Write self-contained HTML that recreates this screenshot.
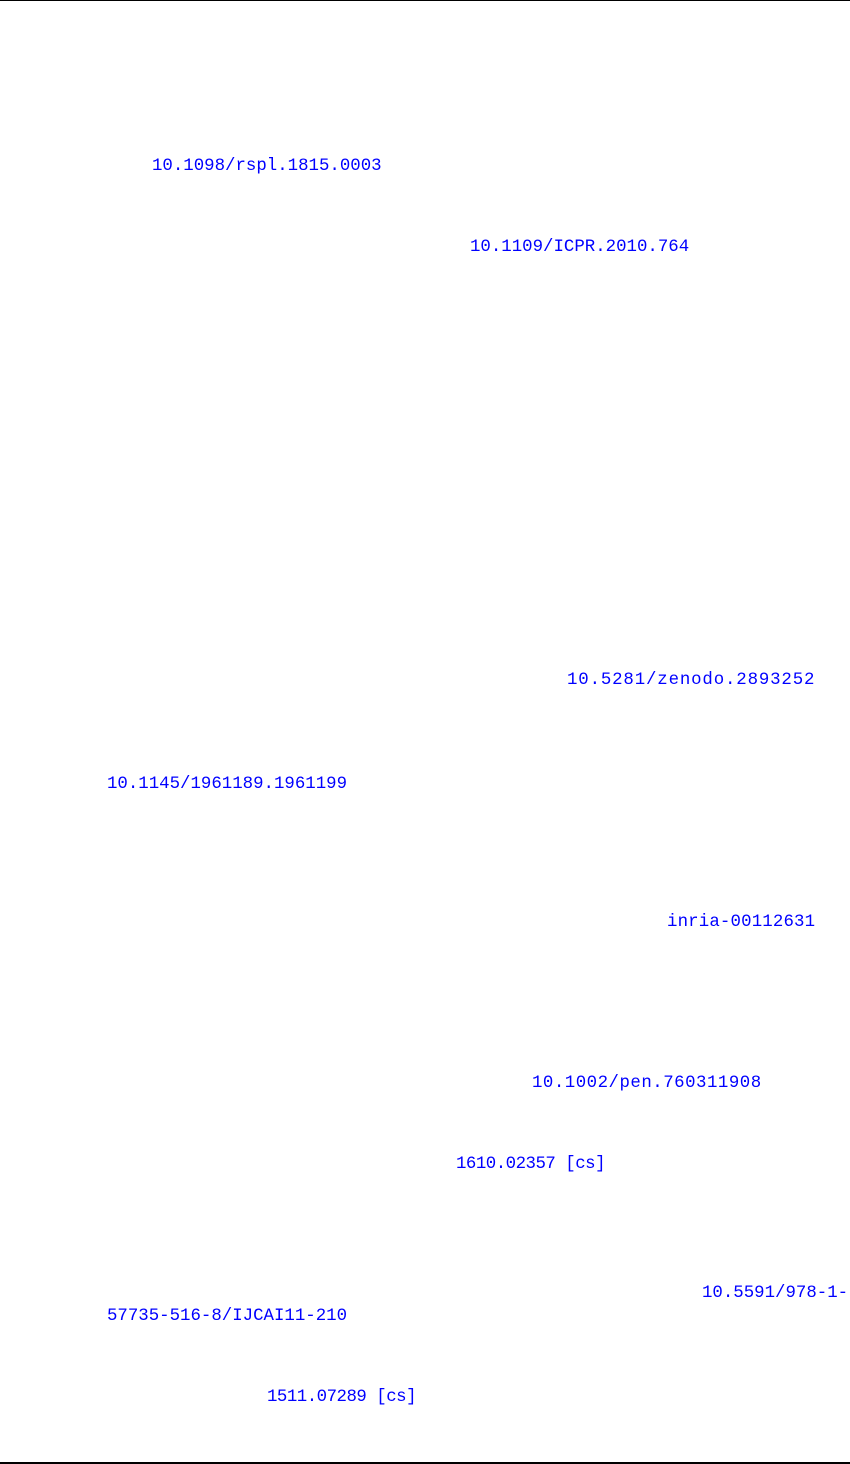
<!DOCTYPE html>
<html><head><meta charset="utf-8"><style>
html,body{margin:0;padding:0;background:#fff;}
body{width:850px;height:1464px;position:relative;overflow:hidden;}
.l{position:absolute;left:0;width:850px;height:1px;background:#000;}
.t{position:absolute;font-family:"Liberation Mono",monospace;font-size:17.4px;line-height:20px;color:#0000ff;white-space:nowrap;}
</style></head><body>
<div class="l" style="top:0"></div>
<div class="l" style="top:1462px;height:2px"></div>
<div class="t" style="left:152px;top:157px">10.1098/rspl.1815.0003</div>
<div class="t" style="left:470px;top:238px">10.1109/ICPR.2010.764</div>
<div class="t" style="left:567px;top:671px;letter-spacing:0.85px">10.5281/zenodo.2893252</div>
<div class="t" style="left:107px;top:775px">10.1145/1961189.1961199</div>
<div class="t" style="left:667px;top:913px;letter-spacing:0.15px">inria-00112631</div>
<div class="t" style="left:532px;top:1074px;letter-spacing:0.5px">10.1002/pen.760311908</div>
<div class="t" style="left:456px;top:1155px;letter-spacing:-0.5px">1610.02357 [cs]</div>
<div class="t" style="left:702px;top:1284px">10.5591/978-1-</div>
<div class="t" style="left:107px;top:1307px">57735-516-8/IJCAI11-210</div>
<div class="t" style="left:267px;top:1388px;letter-spacing:-0.5px">1511.07289 [cs]</div>
</body></html>
